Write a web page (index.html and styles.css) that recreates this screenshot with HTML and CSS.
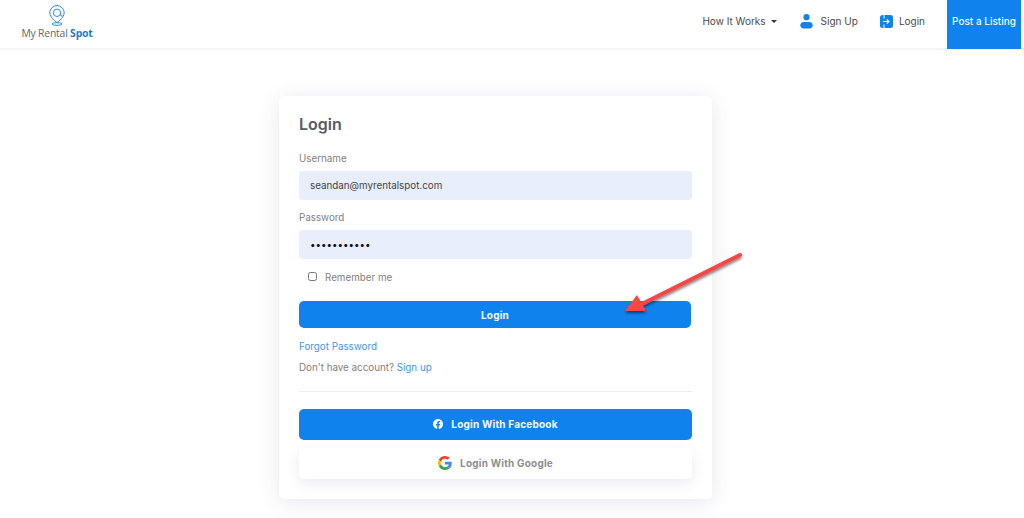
FILE: index.html
```html
<!DOCTYPE html>
<html lang="en">
<head>
  <meta charset="UTF-8" />
  <meta name="viewport" content="width=device-width, initial-scale=1" />
  <title>My Rental Spot - Login</title>
  <link rel="stylesheet" href="styles.css">
</head>
<body>
  <header class="topbar">
    <a class="brand" href="#">
      <svg class="brand-pin" width="16" height="21" viewBox="0 0 16 21" fill="none" stroke="#2b8fd8" stroke-width="1">
        <path d="M8 .6a7.200 7.200 0 0 0-7.200 7.200c0 3 2.300 5.400 4.400 7.600L8 17.600l2.800-2.200c2.100-2.200 4.400-4.600 4.400-7.600A7.200 7.200 0 0 0 8 .6z"/>
        <circle cx="8" cy="7.800" r="3.700"/>
        <path d="M11.700 7.800v2.400c0 1 1.300 1 1.800.2"/>
        <ellipse cx="8" cy="19" rx="5" ry="1.300"/>
      </svg>
      <span class="brand-name">My Rental <b>Spot</b></span>
    </a>
    <nav class="nav">
      <a class="nav-link nav-how" href="#">How It Works <i class="caret"></i></a>
      <a class="nav-link nav-signup" href="#">
        <svg width="13" height="15" viewBox="0 0 13 15" fill="#1082ee"><circle cx="6.500" cy="3.200" r="3.100"/><path d="M3.500 8h6c1.800 0 3.200 1.400 3.200 3.200S11.300 14.500 9.500 14.500h-6C1.700 14.500.3 13 .3 11.200S1.700 8 3.500 8z"/></svg>
        Sign Up
      </a>
      <a class="nav-link nav-login" href="#">
        <svg width="13" height="13" viewBox="0 0 13 13"><rect width="13" height="13" rx="2.500" fill="#1082ee"/><path fill="none" stroke="#fff" stroke-width="1" d="M4 0v3.500M4 9.500V13"/><path fill="none" stroke="#fff" stroke-width="1.100" d="M3 6.500h6M6.800 4.300 9 6.500 6.800 8.700"/></svg>
        Login
      </a>
      <a class="nav-post" href="#">Post a Listing</a>
    </nav>
  </header>

  <main class="page">
    <form class="card">
      <h1 class="card-title">Login</h1>

      <label class="field-label" for="username">Username</label>
      <input class="field-input" id="username" type="text" value="seandan@myrentalspot.com" />

      <label class="field-label field-label-next" for="password">Password</label>
      <input class="field-input field-password" id="password" type="password" value="seandanpass" />

      <label class="remember">
        <input type="checkbox" />
        <span>Remember me</span>
      </label>

      <button class="btn btn-primary" type="button">Login</button>

      <a class="link forgot" href="#">Forgot Password</a>
      <p class="no-account">Don't have account? <a class="link" href="#">Sign up</a></p>

      <hr class="divider" />

      <button class="btn btn-facebook" type="button">
        <svg width="10" height="10" viewBox="0 0 16 16"><path fill="#fff" d="M16 8a8 8 0 1 0-9.250 7.900v-5.590H4.720V8h2.030V6.240c0-2 1.190-3.110 3.020-3.110.87 0 1.790.16 1.790.16v1.970h-1.010c-.99 0-1.300.62-1.300 1.250V8h2.220l-.36 2.310H9.250v5.590A8 8 0 0 0 16 8z"/></svg>
        Login With Facebook
      </button>
      <button class="btn btn-google" type="button">
        <svg width="14" height="14" viewBox="0 0 48 48"><path fill="#EA4335" d="M24 9.500c3.500 0 6.700 1.300 9.100 3.500l6.800-6.800C35.800 2.400 30.200 0 24 0 14.600 0 6.500 5.400 2.600 13.200l7.900 6.200C12.400 13.700 17.700 9.500 24 9.500z"/><path fill="#4285F4" d="M47 24.500c0-1.600-.100-3.100-.400-4.500H24v9h12.900c-.600 3-2.200 5.500-4.700 7.200l7.700 6c4.500-4.200 7.100-10.300 7.100-17.700z"/><path fill="#FBBC05" d="M10.500 28.600c-.500-1.400-.800-3-.800-4.600s.300-3.200.800-4.600l-7.900-6.200C1 16.500 0 20.100 0 24s1 7.500 2.600 10.800l7.900-6.200z"/><path fill="#34A853" d="M24 48c6.500 0 11.900-2.100 15.900-5.800l-7.700-6c-2.200 1.500-4.900 2.300-8.200 2.300-6.300 0-11.600-4.200-13.500-9.900l-7.900 6.200C6.500 42.600 14.600 48 24 48z"/></svg>
        Login With Google
      </button>
    </form>
  </main>

  <!-- annotation on top of the screenshot -->
  <svg class="arrow" width="130" height="80" viewBox="0 0 130 80">
    <defs>
      <filter id="arrowShadow" x="-20%" y="-20%" width="140%" height="150%">
        <feDropShadow dx="0" dy="2" stdDeviation="1.500" flood-color="#000" flood-opacity=".55"/>
      </filter>
    </defs>
    <g filter="url(#arrowShadow)">
      <path d="M116 7 18 56" fill="none" stroke="#f64646" stroke-width="4" stroke-linecap="round"/>
      <path d="M1 63 13 47 22 63z" fill="#f64646"/>
    </g>
  </svg>
</body>
</html>
```

FILE: styles.css
```css
* {
  box-sizing: border-box;
}

body {
  margin: 0;
  font-family: Inter, "Liberation Sans", sans-serif;
  background: #fff;
  color: #555;
  height: 518px;
  overflow: hidden;
  position: relative;
}

a {
  text-decoration: none;
}

.topbar {
  display: flex;
  justify-content: space-between;
  align-items: stretch;
  height: 50px;
  width: 1021px;
  border-bottom: 2px solid #f2f2f3;
}

.brand {
  display: flex;
  flex-direction: column;
  align-items: center;
  width: 72px;
  margin-left: 21px;
  padding-top: 5px;
}

.brand-name {
  font-family: "Open Sans", sans-serif;
  font-size: 10.4px;
  line-height: 14px;
  letter-spacing: -.2px;
  color: #666;
  white-space: nowrap;
}

.brand-name b {
  color: #1c7cc4;
  font-weight: 700;
}

.nav {
  display: flex;
  align-items: stretch;
}

.nav-link {
  display: flex;
  align-items: center;
  padding-bottom: 6px;
  font-size: 10px;
  color: #4a4a4a;
  white-space: nowrap;
}

.nav-how {
  margin-right: 23px;
}

.nav-signup {
  gap: 8px;
  margin-right: 22px;
}

.nav-login {
  gap: 6px;
  margin-right: 22px;
}

.caret {
  display: inline-block;
  margin-left: 5px;
  margin-top: 1px;
  border-left: 3px solid transparent;
  border-right: 3px solid transparent;
  border-top: 3px solid #333;
}

.nav-post {
  display: flex;
  align-items: center;
  justify-content: center;
  width: 74px;
  height: 49px;
  padding-bottom: 8px;
  background: #1082ee;
  color: #f2f7fe;
  font-size: 10px;
  font-weight: 500;
  white-space: nowrap;
}

.page {
  display: flex;
  justify-content: center;
  padding-top: 46px;
  width: 991px;
}

.card {
  display: flex;
  flex-direction: column;
  width: 433px;
  height: 403px;
  padding: 18px 20px 0;
  background: #fff;
  border-radius: 5px;
  box-shadow: 0 3px 22px rgba(60, 60, 110, .12);
}

.card-title {
  margin: 0 0 17px;
  font-size: 16px;
  line-height: 20px;
  font-weight: 600;
  color: #555a63;
}

.field-label {
  font-size: 9.8px;
  line-height: 16px;
  color: #808080;
  margin-bottom: 4px;
}

.field-label-next {
  margin-top: 10px;
}

.field-input {
  height: 29px;
  padding: 0 11px;
  border: 0;
  border-radius: 3px;
  background: #e8eefb;
  font-family: inherit;
  font-size: 9.8px;
  color: #444;
  outline: none;
}

.field-password {
  color: #111;
}

.remember {
  display: flex;
  align-items: center;
  gap: 8px;
  height: 16px;
  margin: 10px 0 0 9px;
  font-size: 9.8px;
  color: #808080;
}

.remember input {
  width: 9px;
  height: 9px;
  margin: 0 0 2px;
}

.btn {
  display: flex;
  align-items: center;
  justify-content: center;
  border: 0;
  border-radius: 5px;
  font-family: inherit;
  font-size: 10px;
  font-weight: 700;
  letter-spacing: .2px;
  width: 100%;
}

.btn-primary {
  height: 27px;
  margin-top: 16px;
  width: 392px;
  background: #1082ee;
  color: #f4f8fe;
}

.link {
  color: #3d94ee;
}

.forgot {
  margin-top: 12px;
  font-size: 9.8px;
  line-height: 14px;
}

.no-account {
  margin: 7px 0 0;
  font-size: 9.8px;
  line-height: 14px;
  color: #808080;
}

.divider {
  width: 100%;
  margin: 16px 0 17px;
  border: 0;
  border-top: 1px solid #eceef1;
}

.btn-facebook {
  gap: 8px;
  height: 31px;
  padding-bottom: 3px;
  background: #1082ee;
  color: #f4f8fe;
}

.btn-google {
  gap: 8px;
  height: 31px;
  margin-top: 8px;
  padding-bottom: 2px;
  background: #fff;
  color: #8e8e8e;
  box-shadow: 0 4px 14px rgba(60, 60, 110, .1);
}

.arrow {
  position: absolute;
  left: 624px;
  top: 248px;
}
```
